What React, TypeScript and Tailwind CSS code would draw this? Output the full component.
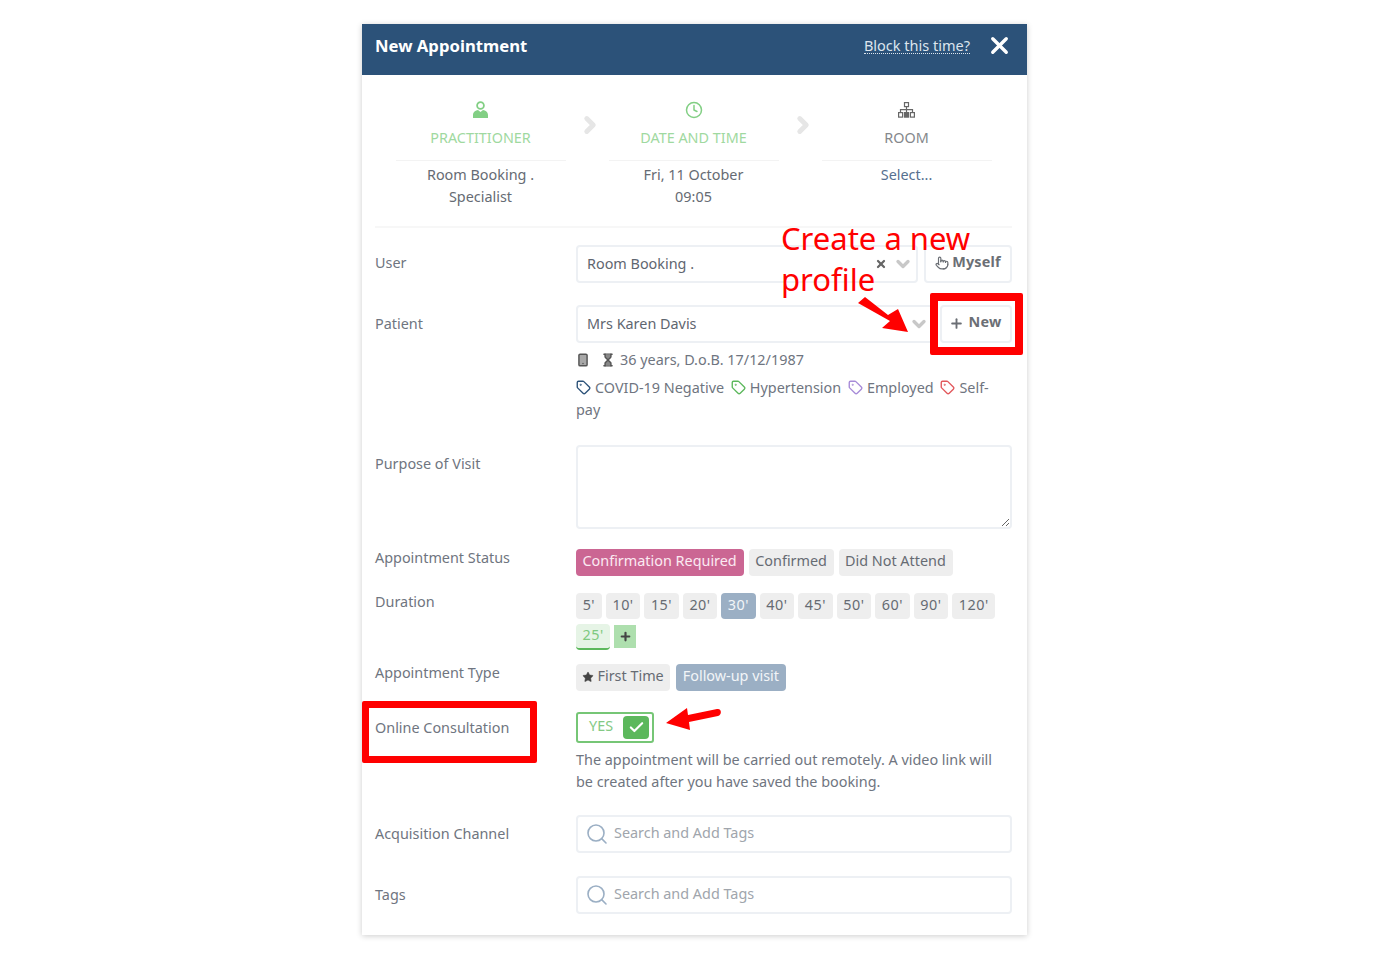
import React from "react";
import { X, Search, Plus, Pointer, Clock, Hourglass, Smartphone, Tag, Star, Check, ChevronRight, ChevronDown } from "lucide-react";

const Label = ({ children, className = "" }: { children: React.ReactNode; className?: string }) => (
  <div className={`w-[200px] shrink-0 text-[14.4px] text-[#6f7580] ${className}`}>{children}</div>
);

const Chip = ({ children, active, pink, className = "" }: { children: React.ReactNode; active?: boolean; pink?: boolean; className?: string }) => (
  <span
    className={`inline-flex items-center rounded-[4px] text-[14.4px] ${
      pink ? "bg-[#cb6693] text-[#fbeaf2]" : active ? "bg-[#9bafc4] text-[#f2f5f8]" : "bg-[#eeeeee] text-[#666b73]"
    } ${className}`}
  >
    {children}
  </span>
);

const Sel = ({ children, x }: { children: React.ReactNode; x?: boolean }) => (
  <div className="flex h-[38px] min-w-0 flex-1 items-center rounded-[4px] border-2 border-[#edf0f4] pl-[9px] pr-[3px] text-[14.4px] text-[#5f6670]">
    <span className="flex-1">{children}</span>
    {x && <X size={12} strokeWidth={4.5} className="mr-[6px] text-[#666]" />}
    <ChevronDown size={20} strokeWidth={4} className="text-[#c8c8c8]" />
  </div>
);

const SearchBox = () => (
  <div className="flex h-[38px] flex-1 items-center gap-[5px] rounded-[4px] border-2 border-[#edf0f4] pl-[7px] text-[14.4px] text-[#a0a5ac]">
    <Search size={24} strokeWidth={1.6} className="text-[#9bafc4]" />
    <span className="pb-[2px]">Search and Add Tags</span>
  </div>
);

const Step = ({ icon, title, green, lines, link }: { icon: React.ReactNode; title: string; green?: boolean; lines: string[]; link?: boolean }) => (
  <div className="flex w-[170px] flex-col items-center">
    <div className="flex h-[20px] items-center">{icon}</div>
    <div className={`mt-[7px] h-[22px] text-[14.4px] leading-[22px] ${green ? "text-[#9fd9a0]" : "text-[#85888c]"}`}>{title}</div>
    <div className="mt-[11px] w-full border-t border-[#f3f3f3] pt-[3px] text-center text-[14.4px] leading-[22px]">
      {lines.map((l) => (
        <div key={l} className={link ? "text-[#56708f]" : "text-[#666b73]"}>{l}</div>
      ))}
    </div>
  </div>
);

const Arrow = () => (
  <div className="flex h-[50px] w-[43px] items-center justify-center pl-[5px]">
    <ChevronRight size={26} strokeWidth={4.5} className="text-[#e6e6e6]" />
  </div>
);

const PatTag = ({ color, children }: { color: string; children: React.ReactNode }) => (
  <>
    <Tag size={15} strokeWidth={2.2} color={color} className="mr-[4px] inline align-[-2px]" />
    <span className="mr-[3px]">{children}</span>{" "}
  </>
);

export default function App() {
  const durations = ["5'", "10'", "15'", "20'", "30'", "40'", "45'", "50'", "60'", "90'", "120'"];
  return (
    <div className="relative h-[960px] w-[1390px] bg-white font-['Noto_Sans','Open_Sans',sans-serif]">
      <div className="absolute left-[362px] top-[24px] h-[911px] w-[665px] bg-white shadow-[0_1px_6px_rgba(0,0,0,0.2)]">
        <header className="flex h-[51px] items-center bg-[#2c5279] pl-[13px] pr-[14px] text-white">
          <h1 className="flex-1 pb-[8px] text-[16.7px] font-bold">New Appointment</h1>
          <span className="mb-[8px] mr-[16px] border-b border-dotted border-[#dce5ee] text-[14.5px] leading-[15px] text-[#dce5ee]">Block this time?</span>
          <X size={27} strokeWidth={3} className="mb-[8px]" />
        </header>

        <div className="pl-[13px] pr-[15px]">
          <section className="flex h-[153px] justify-center gap-0 border-b-2 border-[#f7f7f7] pt-[25px]">
            <Step
              green
              title="PRACTITIONER"
              lines={["Room Booking .", "Specialist"]}
              icon={
                <svg width="17" height="18" viewBox="0 0 17 18" fill="#82cf84">
                  <circle cx="8.5" cy="4.5" r="3.4" fill="none" stroke="#82cf84" strokeWidth="1.8" />
                  <path d="M1 17v-3c0-3 2.500-4.500 5-5l2.500 2 2.500-2c2.500.5 5 2 5 5v3z" />
                </svg>
              }
            />
            <Arrow />
            <Step green title="DATE AND TIME" lines={["Fri, 11 October", "09:05"]} icon={<Clock size={18} strokeWidth={2} className="text-[#82cf84]" />} />
            <Arrow />
            <Step
              link
              title="ROOM"
              lines={["Select..."]}
              icon={
                <svg width="17" height="16" viewBox="0 0 17 16" fill="none" stroke="#666" strokeWidth="1.2">
                  <rect x="6.500" y="0.600" width="4" height="4" />
                  <path d="M8.500 4.600v6M2.500 10.600V7.600h12v3" />
                  <rect x="0.600" y="10.600" width="4" height="4.500" />
                  <rect x="6.500" y="10.600" width="4" height="4.500" fill="#666" />
                  <rect x="12.400" y="10.600" width="4" height="4.500" />
                </svg>
              }
            />
          </section>

          <div className="mt-[17px] flex items-center">
            <Label className="pb-[2px]">User</Label>
            <div className="flex flex-1 gap-[6px] pl-[1px]">
              <Sel x>Room Booking .</Sel>
              <div className="flex h-[38px] w-[88px] items-center justify-center gap-[3px] rounded-[4px] border-2 border-[#edf0f4] pb-[4px] text-[14.4px] font-bold tracking-[0.2px] text-[#6b6f75]">
                <Pointer size={14} strokeWidth={2} className="mt-[2px]" />
                Myself
              </div>
            </div>
          </div>

          <div className="mt-[22px] flex items-center">
            <Label>Patient</Label>
            <div className="flex flex-1 gap-[6px] pl-[1px]">
              <Sel>Mrs Karen Davis</Sel>
              <div className="flex h-[38px] w-[72px] items-center justify-center gap-[5px] rounded-[4px] border-2 border-[#edf0f4] pb-[4px] pr-[2px] text-[14.4px] font-bold tracking-[0.2px] text-[#6b6f75]">
                <Plus size={15} strokeWidth={3} className="mt-[2px]" />
                New
              </div>
            </div>
          </div>

          <div className="ml-[201px] mt-[6px] text-[14.4px] text-[#6f7580]">
            <div className="flex h-[22px] items-center leading-[22px]">
              <Smartphone size={14} strokeWidth={2.5} fill="#a8a8a8" className="text-[#555]" />
              <Hourglass size={14} strokeWidth={2.5} fill="#888" className="ml-[11px] mr-[5px] text-[#555]" />
              36 years, D.o.B. 17/12/1987
            </div>
            <div className="mt-[6px] leading-[22px]">
              <PatTag color="#2c5279">COVID-19 Negative</PatTag>
              <PatTag color="#5cb85c">Hypertension</PatTag>
              <PatTag color="#a78bd8">Employed</PatTag>
              <PatTag color="#e2585c">Self-</PatTag>
              <br />
              pay
            </div>
          </div>

          <div className="mt-[24px] flex items-start">
            <Label className="pt-[8px]">Purpose of Visit</Label>
            <textarea className="ml-[1px] block h-[84px] flex-1 rounded-[4px] border-2 border-[#edf0f4] bg-white outline-none" />
          </div>

          <div className="mt-[20px] flex items-start">
            <Label className="-mt-[2px]">Appointment Status</Label>
            <div className="ml-[1px] flex gap-[5px]">
              <Chip pink className="h-[27px] px-[6.5px] pb-[3px] pr-[7.5px]">Confirmation Required</Chip>
              <Chip className="h-[27px] px-[6px] pb-[3px] pr-[7px]">Confirmed</Chip>
              <Chip className="h-[27px] px-[6px] pb-[3px] pr-[7px]">Did Not Attend</Chip>
            </div>
          </div>

          <div className="mt-[17px] flex items-start">
            <Label className="-mt-[2px]">Duration</Label>
            <div className="ml-[1px] flex-1">
              <div className="flex gap-[4px]">
                {durations.map((d) => (
                  <Chip key={d} active={d === "30'"} className="h-[26px] px-[6.65px] pb-[2px] tracking-[0.5px]">{d}</Chip>
                ))}
              </div>
              <div className="mt-[5px] flex items-start gap-[4px]">
                <span className="inline-flex h-[26px] items-center rounded-[4px] border-b-2 border-[#5cb85c] bg-[#e6f4e6] px-[6.5px] pb-[2px] text-[14.4px] tracking-[0.5px] text-[#7fc97f]">25'</span>
                <span className="mt-[1px] flex h-[23px] w-[22px] items-center justify-center bg-[#aedfae] text-[#444]">
                  <Plus size={13} strokeWidth={4} />
                </span>
              </div>
            </div>
          </div>

          <div className="mt-[14px] flex items-start">
            <Label className="-mt-[2px]">Appointment Type</Label>
            <div className="ml-[1px] flex gap-[6px]">
              <Chip className="h-[27px] px-[6.5px] pb-[3px]">
                <Star size={12} fill="#444" strokeWidth={1} className="mr-[4px] mt-[2px] -ml-[1px] text-[#444]" />
                First Time
              </Chip>
              <Chip active className="h-[27px] px-[6.5px] pb-[3px]">Follow-up visit</Chip>
            </div>
          </div>

          <div className="mt-[21px] flex items-start">
            <Label className="pt-[5px]">Online Consultation</Label>
            <div className="ml-[1px] flex-1">
              <div className="flex h-[31px] w-[78px] items-center justify-between rounded-[3px] border-2 border-[#76c676] pb-[1px] pl-[11px] pr-[3px] text-[14.4px] text-[#84c984]">
                <span className="pb-[2px]">YES</span>
                <span className="flex h-[23px] w-[26px] items-center justify-center rounded-[4px] bg-[#5cb85c] text-white">
                  <Check size={17} strokeWidth={3} />
                </span>
              </div>
              <p className="mt-[6px] text-[14.4px] leading-[22px] text-[#6f7580]">
                The appointment will be carried out remotely. A video link will be created after you have saved the booking.
              </p>
            </div>
          </div>

          <div className="mt-[22px] flex items-center">
            <Label>Acquisition Channel</Label>
            <div className="ml-[1px] flex flex-1"><SearchBox /></div>
          </div>

          <div className="mt-[23px] flex items-center">
            <Label>Tags</Label>
            <div className="ml-[1px] flex flex-1"><SearchBox /></div>
          </div>
        </div>
      </div>

      {/* Annotations painted over the screenshot */}
      <div className="absolute left-[930px] top-[293px] h-[62px] w-[93px] rounded-[2px] border-[8px] border-[#ff0000]" />
      <div className="absolute left-[362px] top-[701px] h-[62px] w-[175px] rounded-[2px] border-[7px] border-[#ff0000]" />
      <div className="absolute left-[781px] top-[227px] text-[31px] text-[#ff0000]">
        <div className="leading-[22px]">Create a new</div>
        <div className="mt-[19px] leading-[22px]">profile</div>
      </div>
      <svg className="absolute left-[855px] top-[295px]" width="56" height="40" viewBox="0 0 56 40" fill="#ff0000">
        <path d="M3 8 L10 2 L33 20 L43 14 L53 37 L27 33 L35 26 Z" />
      </svg>
      <svg className="absolute left-[664px] top-[705px]" width="60" height="28" viewBox="0 0 60 28" fill="#ff0000">
        <path d="M2 18 L23 3 L24 10 L53 4 C58 3 58 10 54 11 L25 17 L26 25 Z" />
      </svg>
    </div>
  );
}
